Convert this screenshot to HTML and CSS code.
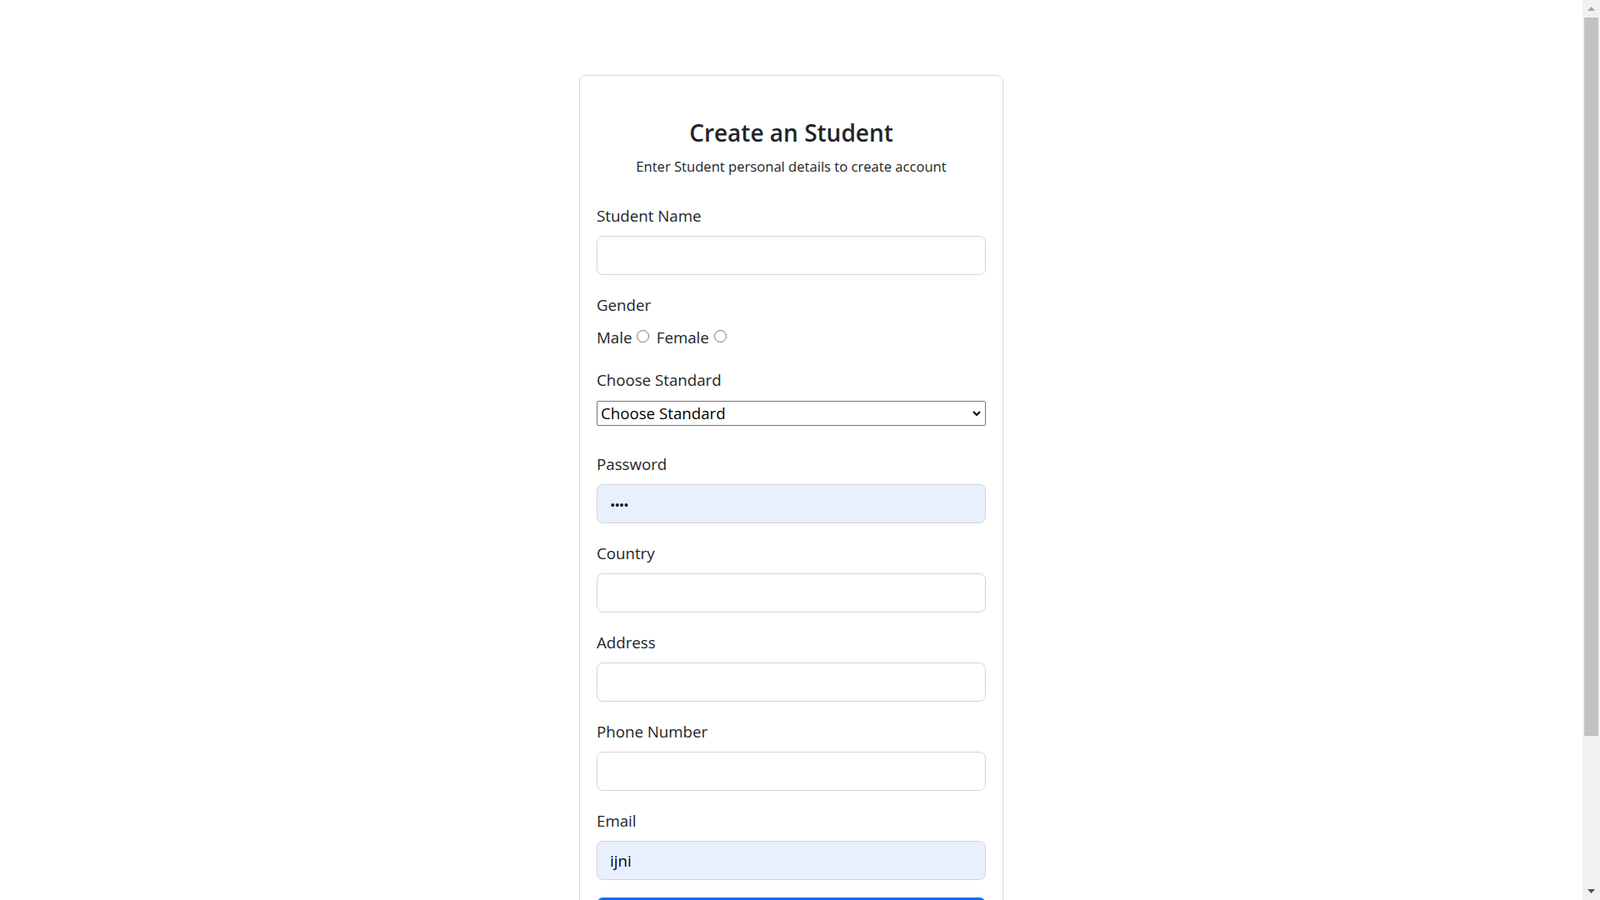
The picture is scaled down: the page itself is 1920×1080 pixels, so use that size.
FILE: index.html
```html
<!DOCTYPE html>
<html lang="en">
<head>
<meta charset="utf-8">
<title>Create an Student</title>
<link rel="stylesheet" href="styles.css">
</head>
<body>
<div class="page">
  <main class="main">
    <div class="card">
      <div class="card-head">
        <h3 class="title">Create an Student</h3>
        <p class="subtitle">Enter Student personal details to create account</p>
      </div>
      <form class="form">
        <div class="group">
          <label class="label">Student Name</label>
          <input class="control" type="text">
        </div>
        <div class="group">
          <label class="label">Gender</label>
          <div class="radio-row"><span>Male</span><input class="radio" type="radio" name="g"> <span>Female</span><input class="radio" type="radio" name="g"></div>
        </div>
        <div class="group group-select">
          <label class="label">Choose Standard</label>
          <div class="select-wrap">
            <select class="select"><option>Choose Standard</option></select>
            <svg class="chev" width="10" height="7" viewBox="0 0 10 7"><polyline points="1,1 5,5 9,1" fill="none" stroke="#000" stroke-width="2"/></svg>
          </div>
        </div>
        <div class="group">
          <label class="label">Password</label>
          <input class="control autofill pw" type="password" value="ijni">
        </div>
        <div class="group">
          <label class="label">Country</label>
          <input class="control" type="text">
        </div>
        <div class="group">
          <label class="label">Address</label>
          <input class="control" type="text">
        </div>
        <div class="group">
          <label class="label">Phone Number</label>
          <input class="control" type="text">
        </div>
        <div class="group">
          <label class="label">Email</label>
          <input class="control autofill" type="text" value="ijni">
        </div>
        <button class="btn" type="button" aria-label="Create Student"></button>
      </form>
    </div>
  </main>
  <div class="scrollbar">
    <div class="sb-btn"><svg width="9" height="5" viewBox="0 0 9 5"><polygon points="0,5 4.5,0 9,5" fill="#a3a3a3"/></svg></div>
    <div class="sb-thumb"></div>
    <div class="sb-space"></div>
    <div class="sb-btn"><svg width="9" height="5" viewBox="0 0 9 5"><polygon points="0,0 9,0 4.5,5" fill="#505050"/></svg></div>
  </div>
</div>
</body>
</html>
```

FILE: styles.css
```css
html, body {
  margin: 0;
  padding: 0;
  height: 100%;
  overflow: hidden;
  background: #fff;
}
body {
  font-family: "Open Sans", "Noto Sans", sans-serif;
  color: #212529;
}
.page {
  display: flex;
  height: 100vh;
}
.main {
  flex: 1;
  overflow: hidden;
}
.card {
  box-sizing: border-box;
  width: 509px;
  margin: 90px auto 0;
  border: 1px solid #d7d7d7;
  border-radius: 8px;
  padding: 0 20px;
  min-height: 1200px;
}
.card-head {
  padding-top: 50px;
  text-align: center;
}
.title {
  margin: 0;
  font-size: 28px;
  font-weight: 600;
  line-height: 36px;
  color: #212529;
}
.subtitle {
  margin: 11.4px 0 0;
  font-size: 16.6px;
  line-height: 24px;
}
.form {
  margin-top: 31.6px;
}
.group {
  margin-bottom: 21px;
}
.group-select {
  margin-bottom: 30.6px;
}
.label {
  display: block;
  font-size: 18.7px;
  line-height: 30px;
  margin-bottom: 9.5px;
}
.control {
  display: block;
  box-sizing: border-box;
  width: 100%;
  height: 46.5px;
  margin: 0;
  padding: 0 15px;
  border: 1px solid #ced4da;
  border-radius: 7.5px;
  background: #fff;
  font-family: "Open Sans", sans-serif;
  font-size: 18.7px;
  color: #000;
  outline: none;
}
.autofill {
  background: #e8f0fe;
}
.pw {
  font-size: 17px;
  letter-spacing: -1px;
  padding-top: 3px;
}
.radio-row {
  font-size: 18.7px;
  line-height: 30px;
}
.radio {
  -webkit-appearance: none;
  appearance: none;
  display: inline-block;
  box-sizing: border-box;
  width: 15px;
  height: 15px;
  margin: 0 3.5px 0 6px;
  border: 1px solid #767676;
  border-radius: 50%;
  background: #fff;
  vertical-align: 1px;
}
.select-wrap {
  position: relative;
}
.select {
  -webkit-appearance: none;
  appearance: none;
  display: block;
  box-sizing: border-box;
  width: 100%;
  height: 30px;
  margin: 0;
  padding: 0 0 0 4px;
  border: 1px solid #767676;
  border-radius: 2px;
  background: #fff;
  font-family: "Open Sans", sans-serif;
  font-size: 18.7px;
  color: #000;
  outline: none;
}
.chev {
  position: absolute;
  right: 6px;
  top: 12px;
}
.btn {
  display: block;
  width: 100%;
  height: 47.5px;
  padding: 0;
  border: 1px solid #0d6efd;
  border-radius: 7.5px;
  background: #0d6efd;
}
.scrollbar {
  width: 21px;
  flex: none;
  background: #f1f1f1;
  display: flex;
  flex-direction: column;
}
.sb-btn {
  height: 21px;
  display: flex;
  align-items: center;
  justify-content: center;
  flex: none;
}
.sb-thumb {
  height: 862px;
  margin: 0 2px 0 2px;
  background: #c1c1c1;
  flex: none;
}
.sb-space {
  flex: 1;
}
```
